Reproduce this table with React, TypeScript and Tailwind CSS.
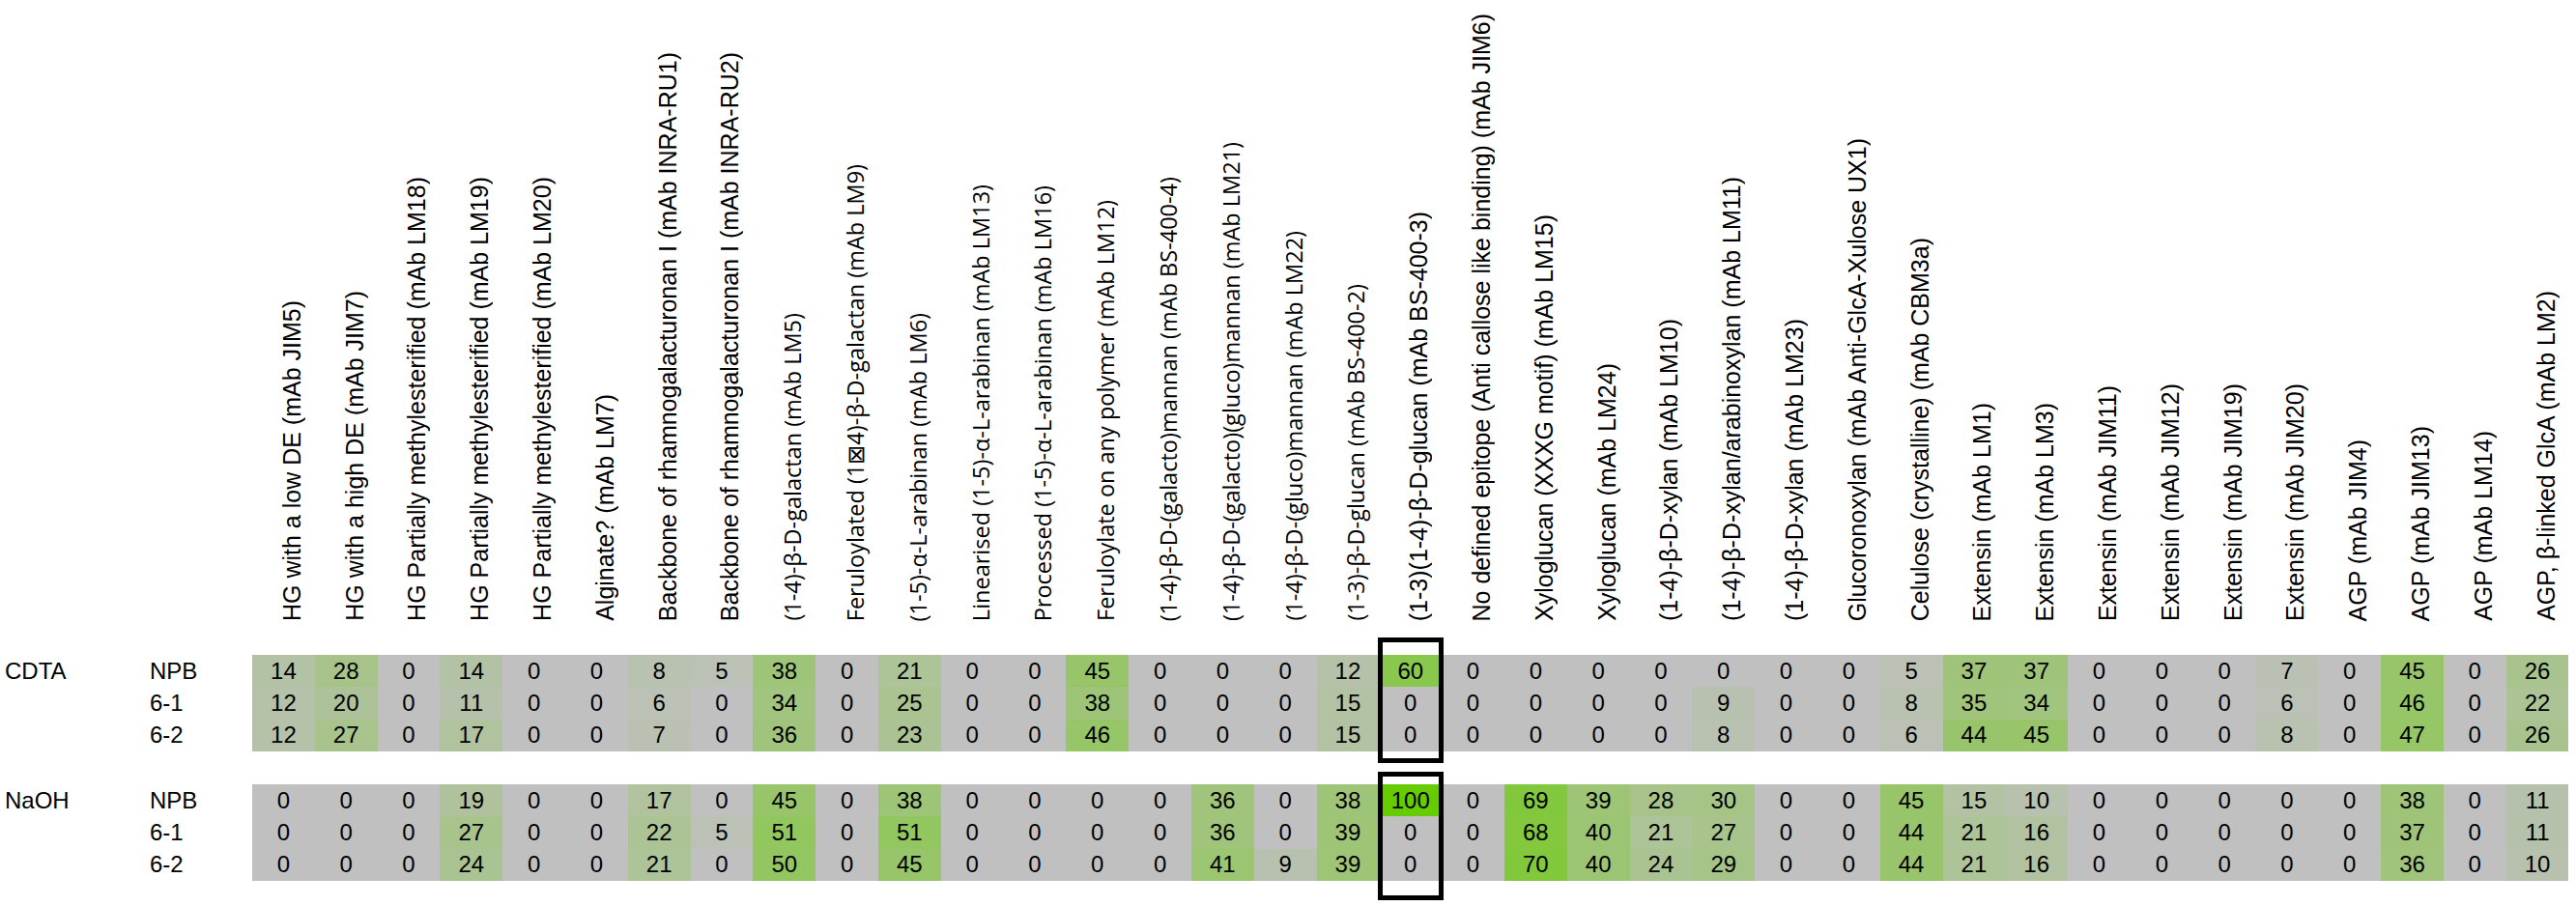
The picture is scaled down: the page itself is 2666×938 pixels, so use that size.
import React from 'react';

type Header = { label: string; alt?: boolean };

// column headers, bottom-to-top text
const headers: Header[] = [
    { label: 'HG with a low DE (mAb JIM5)' },
    { label: 'HG with a high DE (mAb JIM7)' },
    { label: 'HG Partially methylesterified (mAb LM18)' },
    { label: 'HG Partially methylesterified (mAb LM19)' },
    { label: 'HG Partially methylesterified (mAb LM20)' },
    { label: 'Alginate? (mAb LM7)' },
    { label: 'Backbone of rhamnogalacturonan I (mAb INRA-RU1)' },
    { label: 'Backbone of rhamnogalacturonan I (mAb INRA-RU2)' },
    { label: '(1-4)-β-D-galactan (mAb LM5)', alt: true },
    { label: 'Feruloylated (1⊠4)-β-D-galactan (mAb LM9)', alt: true },
    { label: '(1-5)-α-L-arabinan (mAb LM6)', alt: true },
    { label: 'Linearised (1-5)-α-L-arabinan (mAb LM13)', alt: true },
    { label: 'Processed (1-5)-α-L-arabinan (mAb LM16)', alt: true },
    { label: 'Feruloylate on any polymer (mAb LM12)', alt: true },
    { label: '(1-4)-β-D-(galacto)mannan (mAb BS-400-4)', alt: true },
    { label: '(1-4)-β-D-(galacto)(gluco)mannan (mAb LM21)', alt: true },
    { label: '(1-4)-β-D-(gluco)mannan (mAb LM22)', alt: true },
    { label: '(1-3)-β-D-glucan (mAb BS-400-2)', alt: true },
    { label: '(1-3)(1-4)-β-D-glucan (mAb BS-400-3)' },
    { label: 'No defined epitope (Anti callose like binding) (mAb JIM6)' },
    { label: 'Xyloglucan (XXXG motif) (mAb LM15)' },
    { label: 'Xyloglucan (mAb LM24)' },
    { label: '(1-4)-β-D-xylan (mAb LM10)' },
    { label: '(1-4)-β-D-xylan/arabinoxylan (mAb LM11)' },
    { label: '(1-4)-β-D-xylan (mAb LM23)' },
    { label: 'Glucoronoxylan (mAb Anti-GlcA-Xulose UX1)' },
    { label: 'Celulose (crystalline) (mAb CBM3a)' },
    { label: 'Extensin (mAb LM1)' },
    { label: 'Extensin (mAb LM3)' },
    { label: 'Extensin (mAb JIM11)' },
    { label: 'Extensin (mAb JIM12)' },
    { label: 'Extensin (mAb JIM19)' },
    { label: 'Extensin (mAb JIM20)' },
    { label: 'AGP (mAb JIM4)' },
    { label: 'AGP (mAb JIM13)' },
    { label: 'AGP (mAb LM14)' },
    { label: 'AGP, β-linked GlcA (mAb LM2)' },
];

const blocks = [
    {
        name: 'CDTA',
        rows: [
            { label: 'NPB', values: [14, 28, 0, 14, 0, 0, 8, 5, 38, 0, 21, 0, 0, 45, 0, 0, 0, 12, 60, 0, 0, 0, 0, 0, 0, 0, 5, 37, 37, 0, 0, 0, 7, 0, 45, 0, 26] },
            { label: '6-1', values: [12, 20, 0, 11, 0, 0, 6, 0, 34, 0, 25, 0, 0, 38, 0, 0, 0, 15, 0, 0, 0, 0, 0, 9, 0, 0, 8, 35, 34, 0, 0, 0, 6, 0, 46, 0, 22] },
            { label: '6-2', values: [12, 27, 0, 17, 0, 0, 7, 0, 36, 0, 23, 0, 0, 46, 0, 0, 0, 15, 0, 0, 0, 0, 0, 8, 0, 0, 6, 44, 45, 0, 0, 0, 8, 0, 47, 0, 26] },
        ],
    },
    {
        name: 'NaOH',
        rows: [
            { label: 'NPB', values: [0, 0, 0, 19, 0, 0, 17, 0, 45, 0, 38, 0, 0, 0, 0, 36, 0, 38, 100, 0, 69, 39, 28, 30, 0, 0, 45, 15, 10, 0, 0, 0, 0, 0, 38, 0, 11] },
            { label: '6-1', values: [0, 0, 0, 27, 0, 0, 22, 5, 51, 0, 51, 0, 0, 0, 0, 36, 0, 39, 0, 0, 68, 40, 21, 27, 0, 0, 44, 21, 16, 0, 0, 0, 0, 0, 37, 0, 11] },
            { label: '6-2', values: [0, 0, 0, 24, 0, 0, 21, 0, 50, 0, 45, 0, 0, 0, 0, 41, 9, 39, 0, 0, 70, 40, 24, 29, 0, 0, 44, 21, 16, 0, 0, 0, 0, 0, 36, 0, 10] },
        ],
    },
];

// grey (0) -> green (100)
const cellColor = (v: number) => {
    const t = Math.min(v, 100) / 100;
    const mix = (a: number, b: number) => Math.round(a + (b - a) * t);
    return `rgb(${mix(192, 102)}, ${mix(192, 204)}, ${mix(192, 0)})`;
};

const Block: React.FC<{ name: string; rows: { label: string; values: number[] }[] }> = ({ name, rows }) => (
    <div className="flex flex-col">
        {rows.map((row, i) => (
            <div key={row.label} className="flex h-[33.33px] items-center text-[24px]">
                <div className="w-[155px] shrink-0 pl-[5px]">{i === 0 ? name : ''}</div>
                <div className="w-[106px] shrink-0">{row.label}</div>
                {row.values.map((v, j) => (
                    <div
                        key={j}
                        className="w-[64.8px] h-full shrink-0 flex items-center justify-center"
                        style={{ backgroundColor: cellColor(v) }}
                    >
                        {v}
                    </div>
                ))}
            </div>
        ))}
    </div>
);

export default function App() {
    return (
        <div className="w-[2666px] h-[938px] bg-white text-black font-['Liberation_Sans',Arial,sans-serif] overflow-hidden">
            <div className="flex h-[643px]">
                <div className="w-[261px] shrink-0" />
                {headers.map(h => (
                    <div key={h.label} className="w-[64.8px] shrink-0 flex items-end justify-center pl-[18px]">
                        <span
                            className={`[writing-mode:vertical-rl] rotate-180 whitespace-nowrap leading-[29px] ${h.alt ? "font-['Open_Sans',sans-serif] text-[23.5px]" : 'text-[25px]'}`}
                        >
                            {h.label}
                        </span>
                    </div>
                ))}
            </div>
            <div className="relative pt-[35px]">
                <Block {...blocks[0]} />
                <div className="h-[34px]" />
                <Block {...blocks[1]} />
                {/* highlight boxes */}
                <div className="absolute left-[1426px] top-[17px] w-[68px] h-[130px] border-[5px] border-black" />
                <div className="absolute left-[1426px] top-[156px] w-[68px] h-[133px] border-[5px] border-black" />
            </div>
        </div>
    );
}
